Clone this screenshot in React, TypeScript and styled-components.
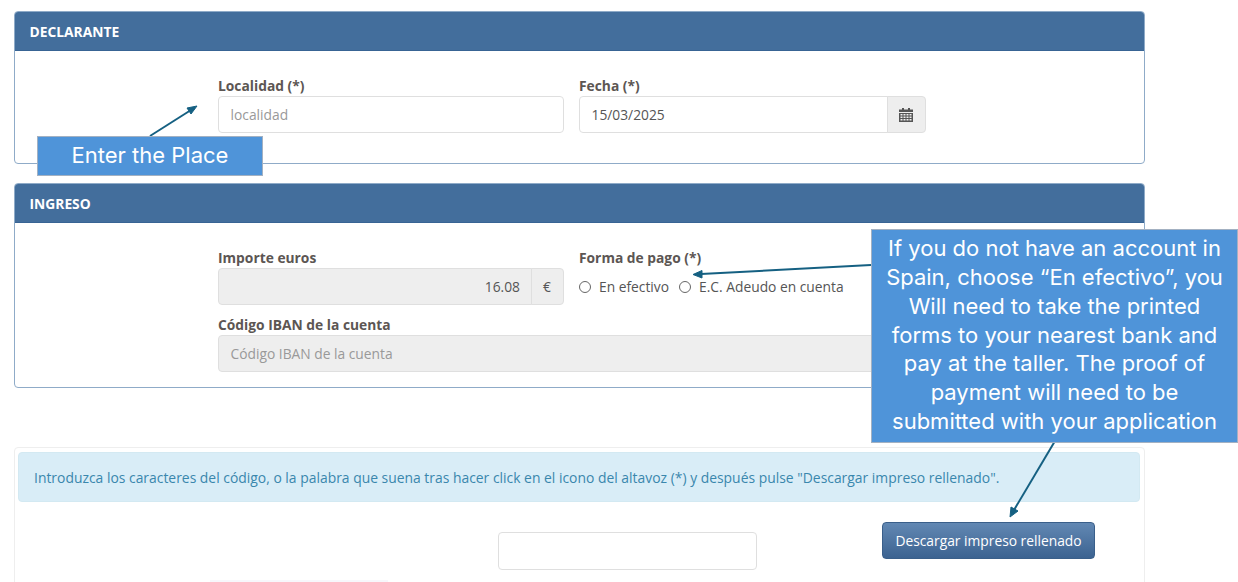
import styled, { createGlobalStyle } from 'styled-components';

const GlobalStyle = createGlobalStyle`
   html, body {
      margin: 0;
      height: 582px;
      overflow: hidden;
      background: #fff;
   }
   * {
      box-sizing: border-box;
   }
`;

const Page = styled.div`
   position: relative;
   width: 1238px;
   height: 582px;
   padding: 11px 93px 0 14px;
   overflow: hidden;
   font-family: 'Open Sans', sans-serif;
   font-size: 13.8px;
   color: #555;
`;

const Panel = styled.section<{ $height: number }>`
   height: ${({ $height }) => $height}px;
   margin-bottom: 19px;
   border: 1px solid #8fabc8;
   border-radius: 4px;
   overflow: hidden;
`;

const PanelHeader = styled.h2`
   display: flex;
   align-items: center;
   height: 40px;
   margin: -1px -1px 0;
   padding: 1px 15.5px 0;
   background: #436e9c;
   border-bottom: 1px solid #386494;
   color: #fff;
   font-size: 13.8px;
   font-weight: 700;
`;

const FormGrid = styled.div`
   display: grid;
   grid-template-columns: 346px 347px;
   column-gap: 15px;
   row-gap: 11px;
   padding: 26px 0 0 203px;
`;

const Field = styled.div<{ $wide?: boolean }>`
   grid-column: ${({ $wide }) => ($wide ? '1 / span 2' : 'auto')};
   min-width: 0;
`;

const Label = styled.label`
   display: block;
   height: 19px;
   font-weight: 700;
   font-size: 13.8px;
   line-height: 17px;
   color: #5c5653;
`;

const InputGroup = styled.div`
   display: flex;
   height: 37px;
`;

const TextBox = styled.div<{ $disabled?: boolean; $placeholder?: boolean; $right?: boolean; $attached?: boolean }>`
   flex: 1;
   height: 37px;
   padding: 0 11px 0 11.5px;
   border: 1px solid #dfdfdf;
   border-radius: ${({ $attached }) => ($attached ? '4px 0 0 4px' : '4px')};
   background: ${({ $disabled }) => ($disabled ? '#eee' : '#fff')};
   color: ${({ $placeholder }) => ($placeholder ? '#999' : '#555')};
   line-height: 35px;
   text-align: ${({ $right }) => ($right ? 'right' : 'left')};
`;

const Addon = styled.div<{ $width: number }>`
   display: flex;
   align-items: center;
   justify-content: center;
   width: ${({ $width }) => $width}px;
   margin-left: -1px;
   padding-right: 1px;
   border: 1px solid #dfdfdf;
   border-radius: 0 4px 4px 0;
   background: #eee;
   color: #555;
`;

const RadioRow = styled.div`
   display: flex;
   align-items: center;
   height: 37px;
   gap: 10px;
`;

const RadioOption = styled.label`
   display: flex;
   align-items: center;
   gap: 8px;
   color: #555;
`;

const RadioMark = styled.span`
   width: 12px;
   height: 12px;
   border: 1px solid #666;
   border-radius: 50%;
   background: #fff;
`;

const Well = styled.section`
   height: 200px;
   margin-top: 59px;
   padding: 4px 4px 4px 3px;
   border: 1px solid #eee;
   border-radius: 4px;
`;

const Alert = styled.div`
   display: flex;
   align-items: center;
   height: 50px;
   padding: 0 15px;
   border: 1px solid #d3e9f2;
   border-radius: 4px;
   background: #d9edf7;
   color: #3a87ad;
   font-size: 13.9px;
`;

const CaptchaRow = styled.div`
   display: flex;
   align-items: flex-start;
   margin-top: 20px;
   padding-left: 480px;
`;

const CaptchaInput = styled.div`
   width: 259px;
   height: 38px;
   margin-top: 10px;
   border: 1px solid #dfdfdf;
   border-radius: 4px;
   background: #fff;
`;

const DownloadButton = styled.button`
   width: 213px;
   height: 37px;
   margin-left: 125px;
   padding: 0;
   border: 1px solid #3a5f8a;
   border-radius: 4px;
   background: linear-gradient(#6288b3, #3c6391);
   color: #fff;
   font-family: inherit;
   font-size: 13.8px;
`;

const CaptchaImage = styled.div`
   position: absolute;
   left: 210px;
   top: 580px;
   width: 178px;
   height: 2px;
   background: #f7f7fb;
`;

const Arrows = styled.svg`
   position: absolute;
   left: 0;
   top: 0;
   pointer-events: none;
`;

const Callout = styled.div<{ $left: number; $top: number; $width: number; $height: number }>`
   position: absolute;
   left: ${({ $left }) => $left}px;
   top: ${({ $top }) => $top}px;
   width: ${({ $width }) => $width}px;
   height: ${({ $height }) => $height}px;
   display: flex;
   align-items: center;
   justify-content: center;
   padding-bottom: 2px;
   border: 1px solid #a3b1c2;
   background: #4f94d9;
   color: #fff;
   font-family: Inter, sans-serif;
   font-size: 22px;
   line-height: 28.8px;
   text-align: center;
`;

const CalendarIcon = () => (
   <svg width="14" height="14" viewBox="0 0 14 14" fill="#555">
      <rect x="3" y="0" width="2" height="3" />
      <rect x="9" y="0" width="2" height="3" />
      <rect x="0" y="1.5" width="14" height="2.5" />
      <path d="M0 5h14v9H0zM1.5 6v1.5h2V6zm3 0v1.5h2V6zm3 0v1.5h2V6zm3 0v1.5h2V6zM1.5 8.5V10h2V8.5zm3 0V10h2V8.5zm3 0V10h2V8.5zm3 0V10h2V8.5zM1.5 11v1.5h2V11zm3 0v1.5h2V11zm3 0v1.5h2V11zm3 0v1.5h2V11z" fillRule="evenodd" />
   </svg>
);

const App = () => {
   return (
      <Page>
         <GlobalStyle />
         <Panel $height={153}>
            <PanelHeader>DECLARANTE</PanelHeader>
            <FormGrid>
               <Field>
                  <Label>Localidad (*)</Label>
                  <TextBox $placeholder>localidad</TextBox>
               </Field>
               <Field>
                  <Label>Fecha (*)</Label>
                  <InputGroup>
                     <TextBox $attached>15/03/2025</TextBox>
                     <Addon $width={39}>
                        <CalendarIcon />
                     </Addon>
                  </InputGroup>
               </Field>
            </FormGrid>
         </Panel>
         <Panel $height={205}>
            <PanelHeader>INGRESO</PanelHeader>
            <FormGrid>
               <Field>
                  <Label>Importe euros</Label>
                  <InputGroup>
                     <TextBox $disabled $right $attached>16.08</TextBox>
                     <Addon $width={33}>€</Addon>
                  </InputGroup>
               </Field>
               <Field>
                  <Label>Forma de pago (*)</Label>
                  <RadioRow>
                     <RadioOption><RadioMark />En efectivo</RadioOption>
                     <RadioOption><RadioMark />E.C. Adeudo en cuenta</RadioOption>
                  </RadioRow>
               </Field>
               <Field $wide>
                  <Label>Código IBAN de la cuenta</Label>
                  <TextBox $disabled $placeholder>Código IBAN de la cuenta</TextBox>
               </Field>
            </FormGrid>
         </Panel>
         <Well>
            <Alert>
               Introduzca los caracteres del código, o la palabra que suena tras hacer click en el icono del altavoz (*) y después pulse "Descargar impreso rellenado".
            </Alert>
            <CaptchaRow>
               <CaptchaInput />
               <DownloadButton>Descargar impreso rellenado</DownloadButton>
            </CaptchaRow>
         </Well>
         <CaptchaImage />
         <Arrows width="1238" height="582" viewBox="0 0 1238 582">
            <g stroke="#156082" strokeWidth="2" fill="#156082">
               <line x1="150" y1="136" x2="191" y2="110" />
               <polygon points="197,106 187,108 191,114" strokeWidth="1" />
               <line x1="871" y1="265" x2="701" y2="274" />
               <polygon points="693,274.5 702,270.5 702,278" strokeWidth="1" />
               <line x1="1055" y1="441" x2="1014" y2="510" />
               <polygon points="1010,517 1011,507 1018,511" strokeWidth="1" />
            </g>
         </Arrows>
         <Callout $left={37} $top={136} $width={226} $height={40}>Enter the Place</Callout>
         <Callout $left={871} $top={229} $width={367} $height={214}>
            If you do not have an account in
            <br />
            Spain, choose “En efectivo”, you
            <br />
            Will need to take the printed
            <br />
            forms to your nearest bank and
            <br />
            pay at the taller. The proof of
            <br />
            payment will need to be
            <br />
            submitted with your application
         </Callout>
      </Page>
   );
};

export default App;
